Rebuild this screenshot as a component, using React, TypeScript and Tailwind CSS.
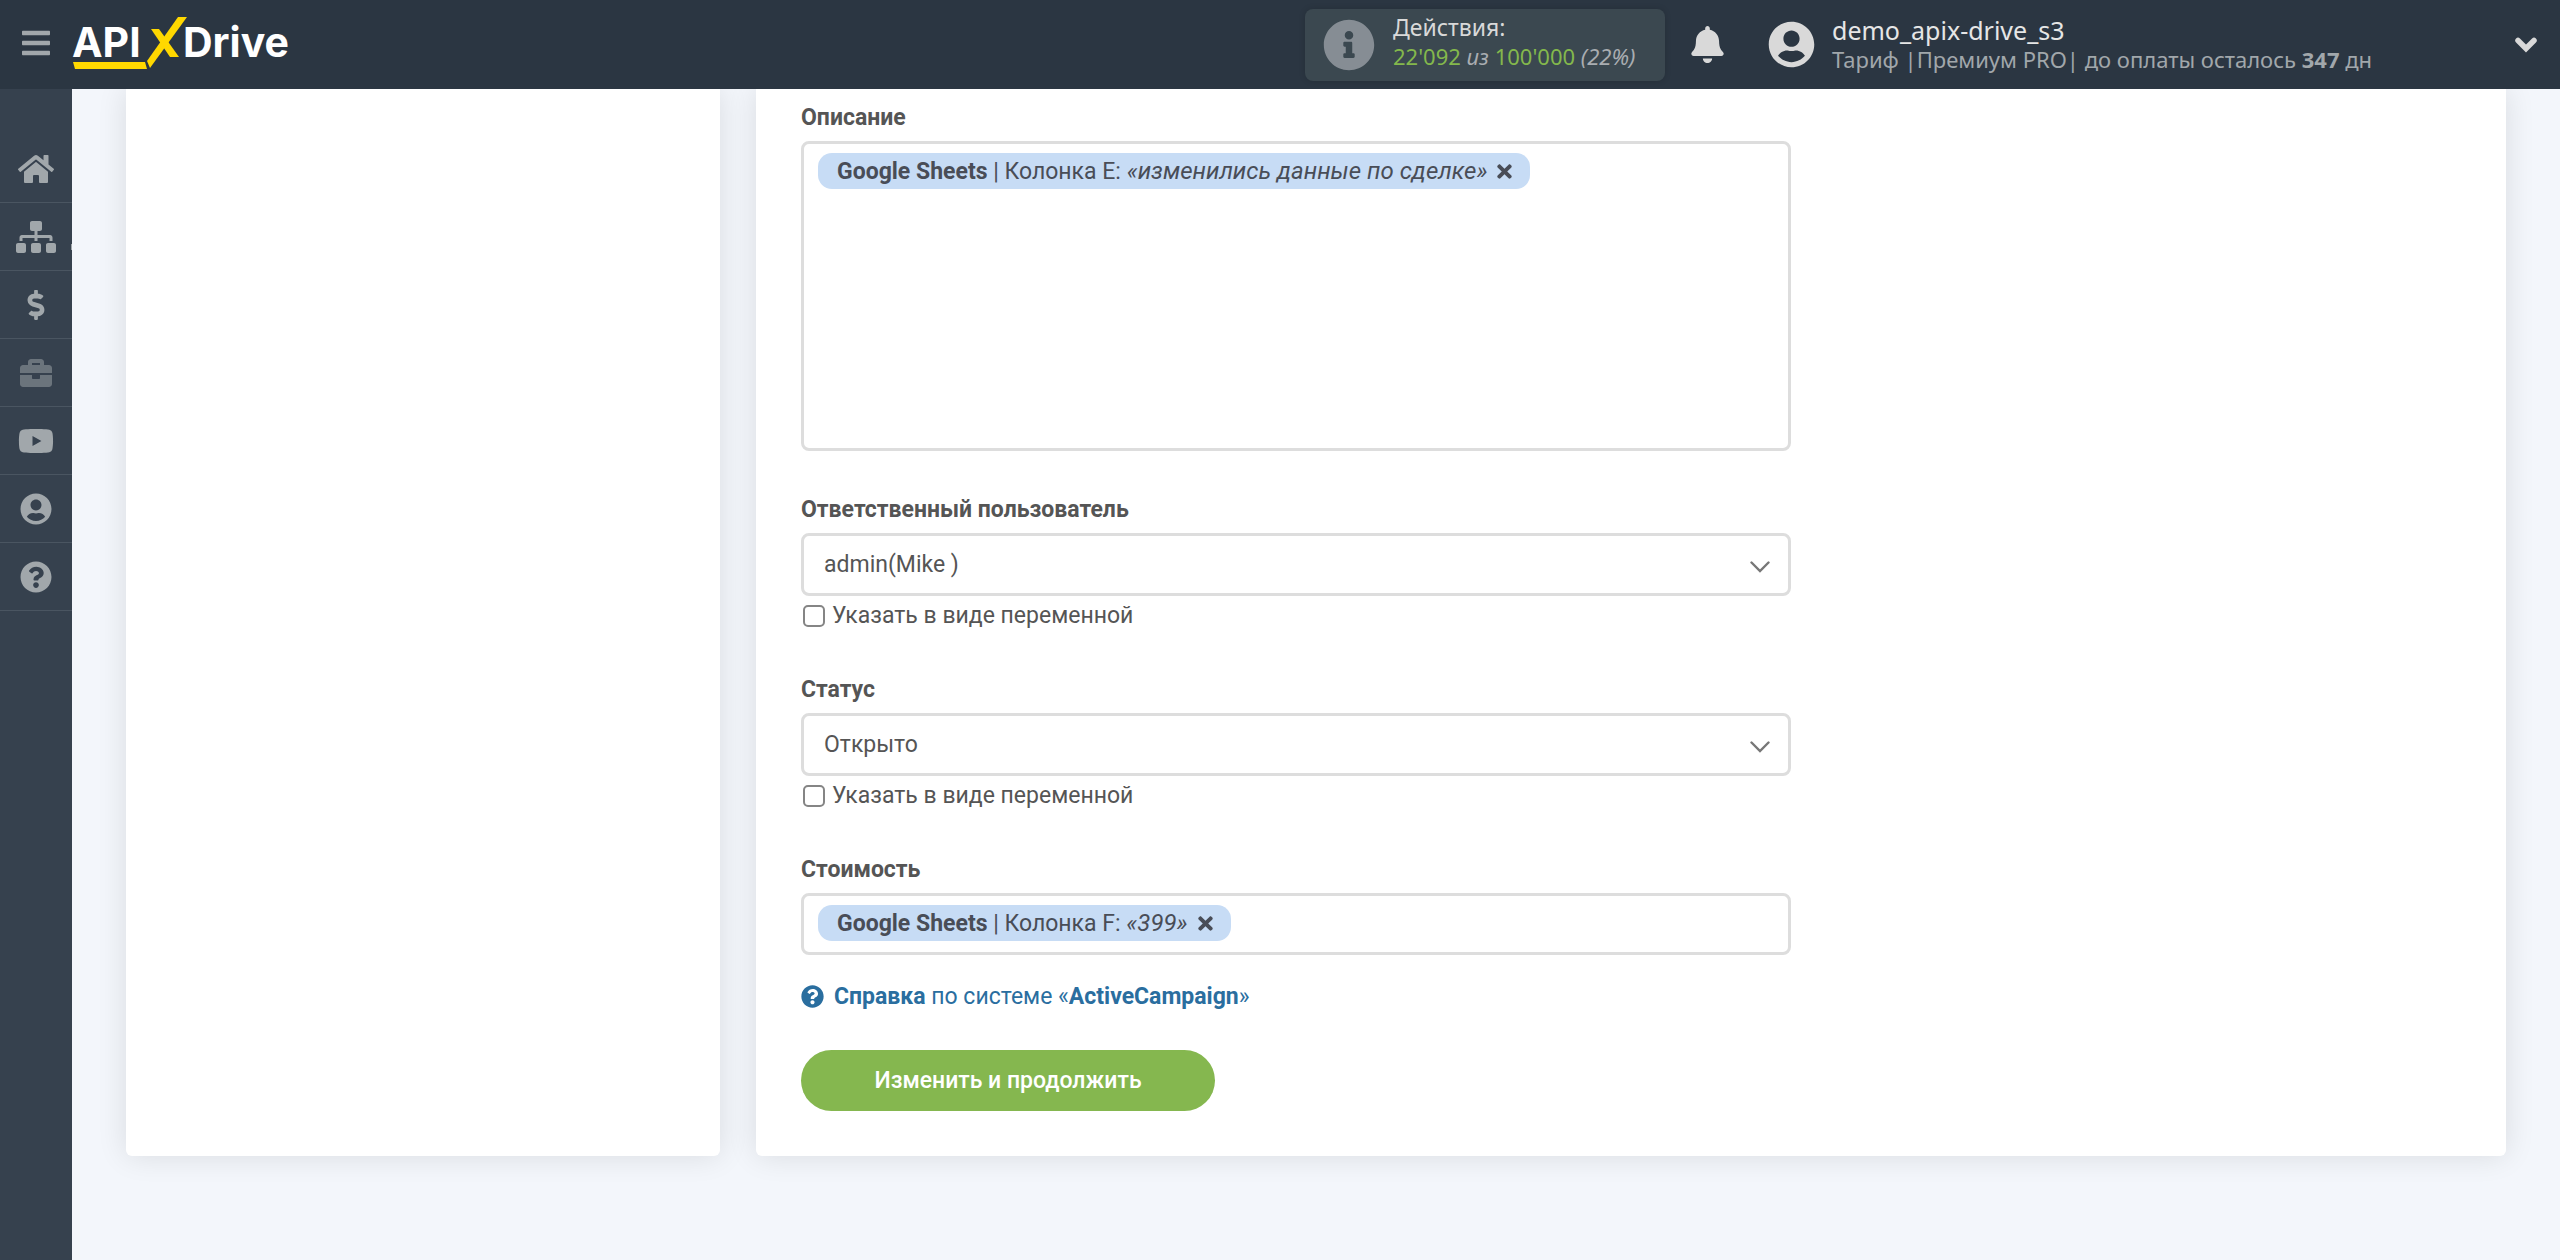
import type { ReactNode } from "react";
import {
  FaBars,
  FaBell,
  FaBriefcase,
  FaDollarSign,
  FaHome,
  FaInfoCircle,
  FaQuestionCircle,
  FaSitemap,
  FaTimes,
  FaUserCircle,
  FaYoutube,
} from "react-icons/fa";

const navItems = [
  { label: "Главная", icon: <FaHome className="size-9" /> },
  { label: "Связи", icon: <FaSitemap className="h-8 w-10" />, marker: true },
  { label: "Оплата", icon: <FaDollarSign className="size-[30px]" /> },
  { label: "Проекты", icon: <FaBriefcase className="size-8 opacity-50" /> },
  { label: "Видео", icon: <FaYoutube className="size-9" /> },
  { label: "Профиль", icon: <FaUserCircle className="size-8" /> },
  { label: "Помощь", icon: <FaQuestionCircle className="size-8" /> },
];

function Logo() {
  return (
    <svg className="h-[56px] w-[224px]" viewBox="-1 2 224 56" aria-label="APIXDrive">
      <g fill="#fff" fontFamily="Inter, sans-serif" fontWeight="700" fontSize="41">
        <text x="-1" y="42">API</text>
        <text x="110" y="42">Drive</text>
      </g>
      <g fill="#ffd800">
        <path d="M105 2h9L77 53l-3-7z" />
        <path d="M78 14h8l20 28h-9z" />
        <path d="M0 47h72l2 7H2z" />
      </g>
    </svg>
  );
}

function Header() {
  return (
    <header className="relative z-10 flex h-[89px] items-center bg-[#2b3642] font-['Noto_Sans',sans-serif] text-[#d9d9d9]">
      <button className="flex w-[72px] shrink-0 justify-center pb-1 text-[#a1a7ab]" aria-label="Меню">
        <FaBars className="size-8" />
      </button>
      <a href="#" className="shrink-0">
        <Logo />
      </a>
      <div className="ml-auto flex h-[72px] w-[360px] shrink-0 items-center rounded-lg bg-[#3b4850] pl-[18px] shadow-[0_0_6px_rgba(0,0,0,0.15)]">
        <FaInfoCircle className="size-[52px] text-[#868d94]" />
        <div className="ml-[18px] pb-1.5 text-[22px] leading-[29px] whitespace-nowrap">
          <div className="text-[23px]">Действия:</div>
          <div className="text-[#84b84c]">
            22'092 <i className="text-[#a9adb1]">из</i> 100'000 <i className="text-[#a9adb1]">(22%)</i>
          </div>
        </div>
      </div>
      <button className="ml-[24px] shrink-0" aria-label="Уведомления">
        <FaBell className="size-[37px]" />
      </button>
      <button className="mr-[22px] ml-[42px] flex w-[770px] shrink-0 items-center text-left">
        <FaUserCircle className="size-[47px]" />
        <span className="ml-[17px] whitespace-nowrap">
          <span className="block text-[25px] leading-[29px] text-[#e6e6e6]">demo_apix-drive_s3</span>
          <span className="block text-[22px] leading-[29px] text-[#a1a7ab]">
            Тариф |Премиум PRO| до оплаты осталось <b>347</b> дн
          </span>
        </span>
        <svg
          className="ml-auto h-4 w-6"
          viewBox="0 0 24 16"
          fill="none"
          stroke="currentColor"
          strokeWidth="5.5"
          strokeLinecap="round"
        >
          <path d="M4 3.500 12 11.500 20 3.500" />
        </svg>
      </button>
    </header>
  );
}

function Sidebar() {
  return (
    <nav className="w-[72px] shrink-0 bg-[#36414e] pt-[46px] text-[#a1a7ab]">
      {navItems.map((item) => (
        <a
          key={item.label}
          href="#"
          aria-label={item.label}
          className="relative flex h-[68px] items-center justify-center border-b border-[#4a5561]"
        >
          {item.icon}
          {item.marker && <span className="absolute right-0 bottom-5 h-1.5 w-px bg-[#a1a7ab]" />}
        </a>
      ))}
    </nav>
  );
}

function Chip({ column, value }: { column: string; value: string }) {
  return (
    <span className="flex h-9 shrink-0 items-center rounded-[14px] bg-[#c7dcf5] pr-[15px] pl-[19px] whitespace-nowrap text-[#494d57]">
      <span className="pt-px">
        <b>Google Sheets</b> | Колонка {column}: <i className="text-[24px]">«{value}»</i>
      </span>
      <button className="ml-[7px]" aria-label="Удалить">
        <FaTimes className="size-[21px]" />
      </button>
    </span>
  );
}

function FieldLabel({ id, children }: { id: string; children: ReactNode }) {
  return (
    <label htmlFor={id} className="mb-[7px] block font-bold">
      {children}
    </label>
  );
}

function SelectField({ id, label, value }: { id: string; label: string; value: string }) {
  return (
    <div>
      <FieldLabel id={id}>{label}</FieldLabel>
      <div className="relative">
        <select
          id={id}
          className="block h-[63px] w-full appearance-none rounded-lg border-3 border-[#ddd] bg-white pl-5"
        >
          <option>{value}</option>
        </select>
        <svg
          className="pointer-events-none absolute top-7 right-[21px] h-3 w-5"
          viewBox="0 0 20 12"
          fill="none"
          stroke="#777"
          strokeWidth="2.4"
          strokeLinecap="round"
        >
          <path d="M1.5 1.5 10 10l8.500-8.500" />
        </svg>
      </div>
      <label className="mt-1 flex h-[31px] items-center">
        <input
          type="checkbox"
          className="ml-0.5 size-[22px] appearance-none rounded-[5px] border-2 border-[#858585] bg-white"
        />
        <span className="ml-[7px]">Указать в виде переменной</span>
      </label>
    </div>
  );
}

export default function App() {
  return (
    <div className="flex min-h-screen flex-col bg-[#f3f6fb] font-[Roboto,sans-serif] text-[23px] leading-[32px] text-[#555]">
      <Header />
      <div className="flex flex-1">
        <Sidebar />
        <main className="flex flex-1 items-stretch gap-9 pr-[54px] pb-[104px] pl-[54px]">
          <aside className="w-[594px] shrink-0 rounded-b-md bg-white shadow-[0_0_30px_rgba(0,0,0,0.11)]" />
          <section className="flex-1 rounded-b-md bg-white px-[45px] pt-[13px] pb-[45px] shadow-[0_0_30px_rgba(0,0,0,0.11)]">
            <form className="flex max-w-[990px] flex-col gap-[43px]" onSubmit={(e) => e.preventDefault()}>
              <div>
                <FieldLabel id="description">Описание</FieldLabel>
                <div className="flex h-[310px] items-start rounded-lg border-3 border-[#ddd] px-[14px] py-[9px]">
                  <Chip column="E" value="изменились данные по сделке" />
                  <textarea id="description" className="h-full min-w-0 flex-1 resize-none pl-2 outline-none" />
                </div>
              </div>
              <SelectField id="owner" label="Ответственный пользователь" value="admin(Mike )" />
              <SelectField id="status" label="Статус" value="Открыто" />
              <div>
                <FieldLabel id="price">Стоимость</FieldLabel>
                <div className="flex h-[62px] items-start rounded-lg border-3 border-[#ddd] px-[14px] py-[9px]">
                  <Chip column="F" value="399" />
                  <input id="price" type="text" className="h-9 min-w-0 flex-1 pl-2 outline-none" />
                </div>
                <a href="#" className="mt-[25px] flex items-center text-[#2a6e9f]">
                  <FaQuestionCircle className="mr-[10px] size-[23px]" />
                  <span className="pt-px">
                    <b>Справка</b> по системе «<b>ActiveCampaign</b>»
                  </span>
                </a>
                <button className="mt-[37px] block h-[61px] w-[414px] rounded-full bg-[#85b74f] pt-px font-medium text-white">
                  Изменить и продолжить
                </button>
              </div>
            </form>
          </section>
        </main>
      </div>
    </div>
  );
}
